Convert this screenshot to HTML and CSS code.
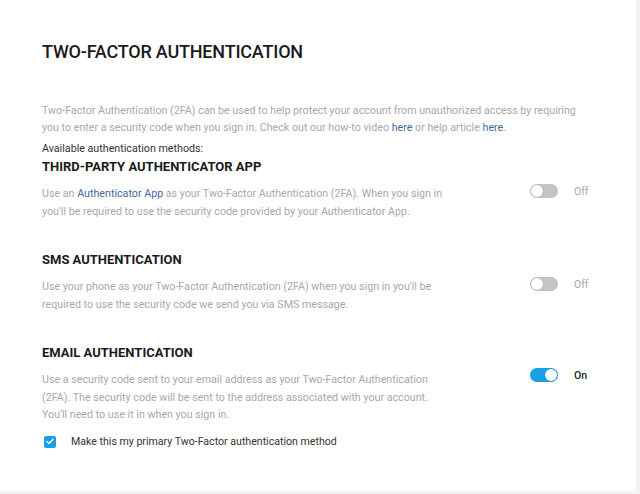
FILE: index.html
```html
<!DOCTYPE html>
<html>
<head>
<meta charset="utf-8">
<link rel="stylesheet" href="styles.css">
</head>
<body>
<div class="card">
  <h1 class="title">TWO-FACTOR AUTHENTICATION</h1>
  <p class="intro">Two-Factor Authentication (2FA) can be used to help protect your account from unauthorized access by requiring<br>you to enter a security code when you sign in. Check out our how-to video <a class="link">here</a> or help article <a class="link">here</a>.</p>
  <p class="available">Available authentication methods:</p>

  <section class="method">
    <h2 class="method-title">THIRD-PARTY AUTHENTICATOR APP</h2>
    <div class="method-row">
      <p class="method-desc">Use an <a class="link">Authenticator App</a> as your Two-Factor Authentication (2FA). When you sign in<br>you'll be required to use the security code provided by your Authenticator App.</p>
      <div class="switch-wrap">
        <span class="switch"><span class="knob"></span></span>
        <span class="state">Off</span>
      </div>
    </div>
  </section>

  <section class="method">
    <h2 class="method-title">SMS AUTHENTICATION</h2>
    <div class="method-row">
      <p class="method-desc">Use your phone as your Two-Factor Authentication (2FA) when you sign in you'll be<br>required to use the security code we send you via SMS message.</p>
      <div class="switch-wrap">
        <span class="switch"><span class="knob"></span></span>
        <span class="state">Off</span>
      </div>
    </div>
  </section>

  <section class="method">
    <h2 class="method-title">EMAIL AUTHENTICATION</h2>
    <div class="method-row">
      <p class="method-desc">Use a security code sent to your email address as your Two-Factor Authentication<br>(2FA). The security code will be sent to the address associated with your account.<br>You'll need to use it in when you sign in.</p>
      <div class="switch-wrap on">
        <span class="switch"><span class="knob"></span></span>
        <span class="state">On</span>
      </div>
    </div>
    <label class="check-row">
      <span class="checkbox"><svg width="8" height="7" viewBox="0 0 8 7"><path d="M1 3.6 L3 5.5 L7 1.2" fill="none" stroke="#fff" stroke-width="1.4" stroke-linecap="round" stroke-linejoin="round"/></svg></span>
      <span class="check-label">Make this my primary Two-Factor authentication method</span>
    </label>
  </section>
</div>
</body>
</html>
```

FILE: styles.css
```css
html, body {
  margin: 0;
  padding: 0;
}
body {
  background: #f2f2f2;
  font-family: Roboto, "Liberation Sans", sans-serif;
}
.card {
  width: 636px;
  height: 491px;
  box-sizing: border-box;
  background: #fff;
  padding: 40px 0 0 42px;
}
.title {
  margin: 0;
  font-size: 18px;
  line-height: 24px;
  font-weight: 500;
  color: #1a1a1a;
  letter-spacing: -0.2px;
}
.intro {
  margin: 38px 0 0;
  font-size: 10.7px;
  line-height: 17px;
  color: #a8a8a8;
}
.link {
  color: #3d6a9c;
}
.available {
  margin: 4px 0 0;
  font-size: 10.7px;
  line-height: 17px;
  color: #333;
}
.method {
  margin-top: 31px;
}
.available + .method {
  margin-top: 1px;
}
.method-title {
  margin: 0;
  font-size: 13px;
  line-height: 18px;
  font-weight: 700;
  color: #1a1a1a;
}
.method-row {
  display: flex;
  align-items: flex-start;
  margin-top: 9px;
}
.method-desc {
  margin: 0;
  width: 488px;
  font-size: 10.7px;
  line-height: 17.5px;
  color: #a8a8a8;
}
.switch-wrap {
  display: flex;
  align-items: center;
  gap: 16px;
  margin-top: -1px;
}
.switch {
  width: 28px;
  height: 14px;
  border-radius: 7px;
  background: #c4c4c4;
  display: flex;
  align-items: center;
  padding: 0 1px;
  box-sizing: border-box;
}
.knob {
  width: 12px;
  height: 12px;
  border-radius: 50%;
  background: #fff;
  box-shadow: 0 0 1px rgba(0,0,0,0.3);
}
.state {
  font-size: 10.5px;
  color: #a8a8a8;
}
.on .switch {
  background: #1a9ee6;
  justify-content: flex-end;
}
.on .state {
  color: #222;
  font-weight: 500;
}
.switch-wrap.on {
  margin-top: -3px;
}
.check-row {
  display: flex;
  align-items: center;
  gap: 15px;
  margin-top: 11px;
  margin-left: 2px;
}
.checkbox {
  width: 12px;
  height: 12px;
  border-radius: 2px;
  background: #1a9ee6;
  display: flex;
  align-items: center;
  justify-content: center;
}
.check-label {
  font-size: 10.6px;
  line-height: 14px;
  color: #333;
}
```
